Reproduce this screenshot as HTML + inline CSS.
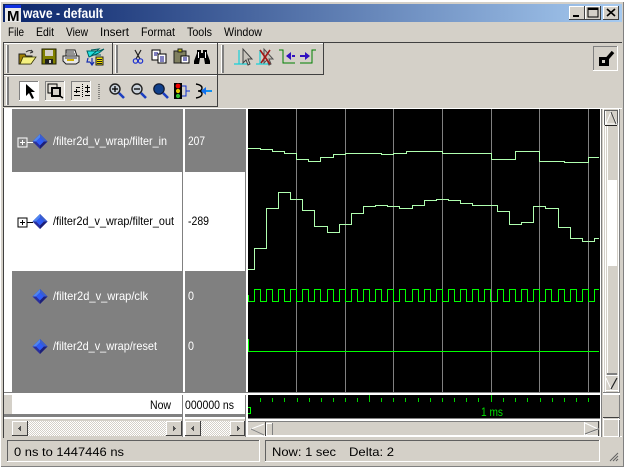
<!DOCTYPE html>
<html><head><meta charset="utf-8"><title>wave - default</title>
<style>
html,body{margin:0;padding:0;background:#fff;width:625px;height:469px;overflow:hidden}
svg{display:block}
text{font-family:"Liberation Sans",sans-serif;font-size:12px}
.c{shape-rendering:crispEdges}
</style></head><body>
<svg width="625" height="469" viewBox="0 0 625 469" xmlns="http://www.w3.org/2000/svg">
<defs>
<linearGradient id="tb" x1="0" x2="1" y1="0" y2="0"><stop offset="0" stop-color="#0a246a"/><stop offset="1" stop-color="#a6caf0"/></linearGradient>
<pattern id="dith" width="2" height="2" patternUnits="userSpaceOnUse"><rect width="2" height="2" fill="#fff"/><rect width="1" height="1" fill="#d4d0c8"/><rect x="1" y="1" width="1" height="1" fill="#d4d0c8"/></pattern>
<g id="dia"><polygon points="0,-7.5 7.5,0 0,7.5 -7.5,0" fill="#2a2f9c"/><polygon points="0,-7.5 -7.5,0 -4,0 0,-4" fill="#4f86f0"/><polygon points="0,-7.5 7.5,0 4,0 0,-4" fill="#3a5fd0"/><polygon points="0,-4 4,0 0,4 -4,0" fill="#2f5cf5"/><polygon points="0,7.5 7.5,0 4,0 0,4" fill="#1c1f78"/></g>
<g id="mag"><circle cx="6" cy="6" r="5" fill="#c8d0d8" stroke="#202020" stroke-width="1.4"/><path d="M10 10L15 15" stroke="#1c3fc0" stroke-width="2.6"/></g>
</defs>

<!-- window -->
<g class="c">
<rect x="1" y="2" width="623" height="465" fill="#d4d0c8"/>
<rect x="1" y="466" width="623" height="1" fill="#808080"/>
<rect x="623" y="2" width="1" height="465" fill="#808080"/>
<rect x="3" y="4" width="619" height="18" fill="url(#tb)"/>
</g>
<!-- title -->
<g class="c">
<rect x="5" y="5" width="16" height="3" fill="#1030e0"/><rect x="5" y="8" width="16" height="14" fill="#e8e8e8"/>
</g>
<text x="7" y="21" style="font-size:15px;font-weight:bold" fill="#000">M</text>
<text x="23" y="18" textLength="80" lengthAdjust="spacingAndGlyphs" style="font-size:14px;font-weight:bold" fill="#fff">wave - default</text>
<g class="c">
<rect x="569" y="6" width="16" height="14" fill="#d4d0c8"/><rect x="569" y="6" width="15" height="1" fill="#fff"/><rect x="569" y="6" width="1" height="13" fill="#fff"/><rect x="584" y="6" width="1" height="14" fill="#404040"/><rect x="569" y="19" width="16" height="1" fill="#404040"/><rect x="573" y="15" width="6" height="2" fill="#000"/>
<rect x="585" y="6" width="16" height="14" fill="#d4d0c8"/><rect x="585" y="6" width="15" height="1" fill="#fff"/><rect x="585" y="6" width="1" height="13" fill="#fff"/><rect x="600" y="6" width="1" height="14" fill="#404040"/><rect x="585" y="19" width="16" height="1" fill="#404040"/><rect x="588" y="8" width="10" height="9" fill="none" stroke="#000"/><rect x="588" y="8" width="10" height="2" fill="#000"/>
<rect x="603" y="6" width="16" height="14" fill="#d4d0c8"/><rect x="603" y="6" width="15" height="1" fill="#fff"/><rect x="603" y="6" width="1" height="13" fill="#fff"/><rect x="618" y="6" width="1" height="14" fill="#404040"/><rect x="603" y="19" width="16" height="1" fill="#404040"/>
</g>
<path d="M607 9L615 16M615 9L607 16" stroke="#000" stroke-width="1.6"/>

<!-- menu -->
<g fill="#000">
<text x="8" y="36" textLength="16" lengthAdjust="spacingAndGlyphs">File</text><text x="36" y="36" textLength="18" lengthAdjust="spacingAndGlyphs">Edit</text><text x="66" y="36" textLength="22" lengthAdjust="spacingAndGlyphs">View</text><text x="100" y="36" textLength="29" lengthAdjust="spacingAndGlyphs">Insert</text><text x="141" y="36" textLength="34" lengthAdjust="spacingAndGlyphs">Format</text><text x="187" y="36" textLength="25" lengthAdjust="spacingAndGlyphs">Tools</text><text x="224" y="36" textLength="38" lengthAdjust="spacingAndGlyphs">Window</text>
</g>

<!-- toolbars -->
<g class="c" fill="none">
<rect x="3" y="42" width="619" height="1" fill="#404040"/>
<rect x="3" y="43" width="1" height="64" fill="#404040"/>
<rect x="3" y="74" width="320" height="1" fill="#404040"/>
<rect x="112" y="42" width="1" height="33" fill="#404040"/>
<rect x="217" y="42" width="1" height="65" fill="#404040"/>
<rect x="323" y="42" width="1" height="33" fill="#404040"/>
<rect x="3" y="106" width="215" height="1" fill="#404040"/>
<rect x="4" y="43" width="108" height="1" fill="#fff"/><rect x="113" y="43" width="104" height="1" fill="#fff"/><rect x="218" y="43" width="105" height="1" fill="#fff"/><rect x="4" y="75" width="213" height="1" fill="#fff"/>
<rect x="6" y="45" width="1" height="28" fill="#fff"/><rect x="7" y="45" width="2" height="28" fill="#808080"/>
<rect x="115" y="45" width="1" height="28" fill="#fff"/><rect x="116" y="45" width="2" height="28" fill="#808080"/>
<rect x="221" y="45" width="1" height="28" fill="#fff"/><rect x="222" y="45" width="2" height="28" fill="#808080"/>
<rect x="6" y="77" width="1" height="28" fill="#fff"/><rect x="7" y="77" width="2" height="28" fill="#808080"/>
<!-- row 2 buttons -->
<rect x="19" y="81" width="20" height="20" fill="#fff"/><rect x="19" y="81" width="19" height="1" fill="#808080"/><rect x="19" y="81" width="1" height="19" fill="#808080"/>
<rect x="45" y="81" width="20" height="20" fill="#e4e0d8"/><rect x="45" y="81" width="20" height="1" fill="#808080"/><rect x="45" y="81" width="1" height="20" fill="#808080"/><rect x="45" y="100" width="20" height="1" fill="#fff"/><rect x="64" y="81" width="1" height="20" fill="#fff"/>
<rect x="71" y="81" width="20" height="20" fill="#e4e0d8"/><rect x="71" y="81" width="20" height="1" fill="#808080"/><rect x="71" y="81" width="1" height="20" fill="#808080"/><rect x="71" y="100" width="20" height="1" fill="#fff"/><rect x="90" y="81" width="1" height="20" fill="#fff"/>
<!-- top-right button -->
<rect x="593" y="46" width="25" height="25" fill="#d4d0c8"/><rect x="593" y="46" width="25" height="1" fill="#808080"/><rect x="593" y="46" width="1" height="25" fill="#808080"/><rect x="593" y="70" width="25" height="1" fill="#fff"/><rect x="617" y="46" width="1" height="25" fill="#fff"/>
<rect x="599" y="57" width="10" height="9" fill="#000"/><rect x="602" y="60" width="3" height="3" fill="#d4d0c8"/>
</g>
<path d="M606 60L613 52" stroke="#000" stroke-width="3.4"/>

<!-- row 1 icons -->
<g>
<path d="M19 54h6l1 2h6v2l-2 6H19z" fill="#a08000" stroke="#202020"/><path d="M20 64l3-7h13l-5 7z" fill="#f4f080" stroke="#303000" stroke-width=".8"/><path d="M26 52q4-3 7 0M33 52l-2-2M33 52l-3 1" fill="none" stroke="#303030"/>
<g class="c"><rect x="42" y="49" width="14" height="15" fill="#808000" stroke="#202000"/><rect x="45" y="50" width="8" height="6" fill="#d4d0c8"/><rect x="45" y="59" width="8" height="5" fill="#202020"/><rect x="49" y="60" width="2" height="3" fill="#d4d0c8"/></g>
<path d="M66 50h9l2 6h-11zM63 56h16v6l-3 2H66l-3-3z" fill="#e8e8e8" stroke="#202020"/><path d="M65 58h12M66 52h8M67 54h8" stroke="#404040"/><rect x="67" y="59" width="7" height="2" fill="#d0b000" class="c"/>
<path d="M87 51h12l5-2-5 4-10 4z" fill="#20e0e0" stroke="#006060"/><path d="M91 50l8-1-7 6h9" fill="none" stroke="#006060"/>
<rect x="96" y="57" width="7" height="8" fill="#f0e000" stroke="#202020" class="c"/><path d="M97 59.5h5M97 61.5h5M97 63.5h5" stroke="#202020"/>
<path d="M88 58l-1 4 3 0M92 58v6M90 62l2 3 2-3" fill="none" stroke="#1830b0" stroke-width="1.2"/>
<!-- scissors -->
<path d="M135 50l5 9M141 50l-5 9" stroke="#202020" stroke-width="1.2"/><circle cx="135.5" cy="61" r="2.2" fill="none" stroke="#1c30d0" stroke-width="1.2"/><circle cx="140.5" cy="61" r="2.2" fill="none" stroke="#1c30d0" stroke-width="1.2"/>
<!-- copy -->
<g class="c"><rect x="152" y="50" width="8" height="10" fill="#fff" stroke="#000"/><rect x="158" y="54" width="8" height="9" fill="#fff" stroke="#000"/></g><path d="M154 53h4M154 55h3M160 57h4M160 59h4M160 61h4" stroke="#000080"/>
<!-- paste -->
<g class="c"><rect x="174" y="51" width="12" height="12" fill="#808060" stroke="#202020"/><rect x="178" y="49" width="4" height="3" fill="#c0c000" stroke="#202020"/><rect x="181" y="56" width="8" height="7" fill="#fff" stroke="#000"/></g><path d="M183 58h4M183 60h4" stroke="#000080"/>
<!-- binoculars -->
<path d="M197 50h4v3h2v-3h4v3l3 8v3h-5l-1-6h-4l-1 6h-5v-3l3-8z" fill="#000"/><rect x="198" y="52" width="1" height="6" fill="#fff" class="c"/><rect x="205" y="52" width="1" height="6" fill="#fff" class="c"/>
<!-- third group -->
<path d="M239 50v14M234 64h13" stroke="#18d0d8" stroke-width="1.2" fill="none"/>
<path d="M243 49v14l3-3 2 5 2-1-2-5h4z" fill="#c8c4bc" stroke="#404040"/>
<path d="M260 50v14M256 64h13" stroke="#18d0d8" stroke-width="1.2" fill="none"/>
<path d="M264 49v14l3-3 2 5 2-1-2-5h4z" fill="#c8c4bc" stroke="#505050"/>
<path d="M260 50l10 14M270 50l-9 13" stroke="#a01818" stroke-width="1.6"/>
<path d="M279 50h4v13h12" class="c" fill="none" stroke="#008000"/><path d="M290 56h-3M292 56h3" stroke="#3010c0" stroke-width="2"/><path d="M286 56l5-4v8z" fill="#3010c0"/>
<path d="M316 50h-4v13h-12" class="c" fill="none" stroke="#008000"/><path d="M300 56h6" stroke="#3010c0" stroke-width="2"/><path d="M310 56l-5-4v8z" fill="#3010c0"/>
</g>

<!-- row 2 icons -->
<path d="M26 84v12l3-3 3 6 2-1-3-6h4z" fill="#000"/>
<g class="c"><rect x="48" y="84" width="9" height="9" fill="none" stroke="#000"/><rect x="52" y="88" width="8" height="8" fill="#d4d0c8" stroke="#000" stroke-width="2"/></g>
<path d="M60 96l3 2" stroke="#000" stroke-width="1.5"/>
<g class="c" fill="#000">
<rect x="74" y="91" width="6" height="1"/><rect x="74" y="95" width="6" height="1"/><rect x="82" y="84" width="1" height="1"/><rect x="82" y="86" width="1" height="1"/><rect x="82" y="88" width="1" height="1"/><rect x="82" y="90" width="1" height="1"/><rect x="82" y="92" width="1" height="1"/><rect x="82" y="94" width="1" height="1"/><rect x="82" y="96" width="1" height="1"/><rect x="85" y="87" width="5" height="1"/><rect x="85" y="91" width="5" height="1"/><rect x="85" y="95" width="5" height="1"/><rect x="76" y="87" width="4" height="1"/><rect x="87" y="85" width="1" height="4"/><rect x="87" y="89" width="1" height="4"/><rect x="76" y="89" width="1" height="4"/>
</g>
<path d="M99 84v15" stroke="#303030" stroke-dasharray="1 1" class="c"/>
<use href="#mag" x="109" y="83"/><path d="M112 89h6M115 86v6" stroke="#000" stroke-width="1.3"/>
<use href="#mag" x="131" y="83"/><path d="M134 89h6" stroke="#000" stroke-width="1.3"/>
<circle cx="159" cy="89" r="5.2" fill="#10408c" stroke="#101830" stroke-width="1.2"/><path d="M163 93l5 5" stroke="#1c3fc0" stroke-width="2.6"/>
<rect x="174" y="83" width="8" height="16" fill="#000" class="c"/><circle cx="178" cy="86" r="2.4" fill="#f00000"/><circle cx="178" cy="91" r="2.1" fill="#e8c800"/><circle cx="178" cy="96" r="2.1" fill="#30c030"/>
<path d="M182 86h4v5h4M182 96h4v-5" fill="none" stroke="#1030d0" class="c"/>
<path d="M196 84q6 1 6 4t-4 3q4 0 4 3t-6 4" fill="none" stroke="#000" stroke-width="1.4"/>
<path d="M204 91h8" stroke="#1090f0" stroke-width="2"/><path d="M201 91l5-4v8z" fill="#1070f0"/>

<!-- panes -->
<g class="c">
<rect x="3" y="108" width="619" height="1" fill="#fff"/>
<rect x="3" y="108" width="1" height="330" fill="#404040"/>
<rect x="4" y="109" width="8" height="283" fill="#fff"/>
<rect x="12" y="109" width="170" height="63" fill="#808080"/>
<rect x="12" y="172" width="170" height="99" fill="#fff"/>
<rect x="12" y="271" width="170" height="121" fill="#808080"/>
<rect x="182" y="109" width="1" height="328" fill="#808080"/><rect x="183" y="109" width="2" height="328" fill="#fff"/>
<rect x="185" y="109" width="60" height="63" fill="#808080"/>
<rect x="185" y="172" width="60" height="99" fill="#fff"/>
<rect x="185" y="271" width="60" height="121" fill="#808080"/>
<rect x="245" y="109" width="1" height="328" fill="#808080"/><rect x="246" y="109" width="2" height="328" fill="#fff"/>
<rect x="248" y="109" width="352" height="283" fill="#000"/>
<g fill="#808080">
<rect x="296" y="109" width="1" height="283"/><rect x="345" y="109" width="1" height="283"/><rect x="393" y="109" width="1" height="283"/><rect x="442" y="109" width="1" height="283"/><rect x="491" y="109" width="1" height="283"/><rect x="539" y="109" width="1" height="283"/><rect x="588" y="109" width="1" height="283"/>
</g>
<!-- horizontal split -->
<rect x="4" y="392" width="596" height="1" fill="#808080"/><rect x="4" y="393" width="596" height="2" fill="#fff"/>
<rect x="4" y="395" width="8" height="19" fill="#d4d0c8"/>
<rect x="12" y="395" width="170" height="19" fill="#fff"/>
<rect x="185" y="395" width="60" height="19" fill="#fff"/>
<rect x="248" y="395" width="352" height="23" fill="#000"/>
<rect x="4" y="414" width="241" height="3" fill="#808080"/><rect x="4" y="417" width="241" height="2" fill="#fff"/>
<rect x="4" y="419" width="241" height="18" fill="#d4d0c8"/>
<rect x="183" y="395" width="2" height="42" fill="#fff"/><rect x="182" y="395" width="1" height="42" fill="#808080"/>
<rect x="246" y="395" width="2" height="42" fill="#fff"/><rect x="245" y="395" width="1" height="42" fill="#808080"/>
<rect x="248" y="418" width="352" height="1" fill="#808080"/><rect x="248" y="419" width="352" height="2" fill="#fff"/>
<rect x="248" y="421" width="351" height="15" fill="#d4d0c8"/><rect x="248" y="421" width="351" height="1" fill="#808080"/><rect x="248" y="435" width="351" height="1" fill="#fff"/>
<rect x="248" y="436" width="374" height="1" fill="#fff"/>
<!-- h scrollbars -->
<rect x="12" y="421" width="170" height="15" fill="url(#dith)"/>
<rect x="12" y="421" width="16" height="15" fill="#d4d0c8"/><rect x="12" y="421" width="16" height="1" fill="#fff"/><rect x="12" y="421" width="1" height="15" fill="#fff"/><rect x="12" y="435" width="16" height="1" fill="#404040"/><rect x="27" y="421" width="1" height="15" fill="#404040"/>
<rect x="166" y="421" width="16" height="15" fill="#d4d0c8"/><rect x="166" y="421" width="16" height="1" fill="#fff"/><rect x="166" y="421" width="1" height="15" fill="#fff"/><rect x="166" y="435" width="16" height="1" fill="#404040"/><rect x="181" y="421" width="1" height="15" fill="#404040"/>
<rect x="185" y="421" width="60" height="15" fill="url(#dith)"/>
<rect x="185" y="421" width="16" height="15" fill="#d4d0c8"/><rect x="185" y="421" width="16" height="1" fill="#fff"/><rect x="185" y="421" width="1" height="15" fill="#fff"/><rect x="185" y="435" width="16" height="1" fill="#404040"/><rect x="200" y="421" width="1" height="15" fill="#404040"/>
<rect x="230" y="421" width="15" height="15" fill="#d4d0c8"/><rect x="230" y="421" width="15" height="1" fill="#fff"/><rect x="230" y="421" width="1" height="15" fill="#fff"/><rect x="230" y="435" width="15" height="1" fill="#404040"/><rect x="244" y="421" width="1" height="15" fill="#404040"/>
<!-- wave hscroll -->
<rect x="265" y="422" width="1" height="14" fill="#404040"/><rect x="266" y="423" width="1" height="12" fill="#fff"/>
<rect x="267" y="424" width="6" height="11" fill="#d4d0c8"/><rect x="272" y="423" width="1" height="12" fill="#808080"/><rect x="267" y="423" width="5" height="1" fill="#fff"/>
<rect x="584" y="422" width="1" height="13" fill="#fff"/><rect x="598" y="421" width="1" height="15" fill="#404040"/>
<!-- v scroll -->
<rect x="600" y="109" width="1" height="328" fill="#fff"/><rect x="601" y="109" width="1" height="328" fill="#808080"/><rect x="602" y="109" width="1" height="328" fill="#d4d0c8"/><rect x="603" y="109" width="1" height="328" fill="#fff"/>
<rect x="604" y="110" width="14" height="282" fill="#d4d0c8"/>
<rect x="604" y="110" width="14" height="1" fill="#606060"/><rect x="604" y="110" width="1" height="15" fill="#606060"/><rect x="617" y="110" width="1" height="15" fill="#606060"/>
<rect x="605" y="111" width="1" height="281" fill="#fff"/>
<rect x="607" y="125" width="1" height="250" fill="#fff"/><rect x="616" y="125" width="1" height="250" fill="#fff"/>
<rect x="605" y="125" width="12" height="1" fill="#202020"/>
<rect x="608" y="126" width="9" height="54" fill="#d4d0c8"/>
<rect x="608" y="180" width="9" height="86" fill="#fff"/>
<rect x="608" y="266" width="9" height="108" fill="#d4d0c8"/>
<rect x="607" y="373" width="10" height="2" fill="#808080"/><rect x="605" y="375" width="13" height="1" fill="#fff"/>
<rect x="605" y="390" width="13" height="1" fill="#fff"/>
<rect x="618" y="109" width="1" height="328" fill="#fff"/><rect x="619" y="109" width="1" height="328" fill="#808080"/>
<rect x="603" y="392" width="17" height="1" fill="#808080"/><rect x="603" y="393" width="17" height="2" fill="#fff"/>
<rect x="603" y="395" width="16" height="22" fill="#d4d0c8"/><rect x="603" y="417" width="16" height="1" fill="#404040"/><rect x="603" y="419" width="17" height="1" fill="#fff"/>
</g>
<!-- arrow triangle outlines -->
<path d="M611 112l-5 12h11z" fill="#d4d0c8" stroke="#fff"/><path d="M611 112l5 12" stroke="#404040" fill="none"/>
<path d="M606 378l5 11 6-11" fill="none" stroke="#fff"/><path d="M611 389l6-11" stroke="#202020" stroke-width="1.2"/>
<path d="M264 424L251 429L264 435" fill="none" stroke="#fff"/><path d="M251 429L264 435" stroke="#808080"/>
<path d="M585 423l13 6-13 6" fill="none" stroke="#fff"/><path d="M598 429l-13 5" stroke="#707070"/>
<path class="c" fill="#505050" d="M20 426h1v1h-1zM19 427h2v1h-2zM18 428h3v1h-3zM19 429h2v1h-2zM20 430h1v1h-1zM193 426h1v1h-1zM192 427h2v1h-2zM191 428h3v1h-3zM192 429h2v1h-2zM193 430h1v1h-1z"/>
<path class="c" fill="#505050" d="M173 426h1v5h-1zM174 427h1v3h-1zM175 428h1v1h-1zM237 426h1v5h-1zM238 427h1v3h-1zM239 428h1v1h-1z"/>

<!-- signal rows -->
<g class="c">
<rect x="18" y="138" width="9" height="9" fill="none" stroke="#fff"/><rect x="20" y="142" width="5" height="1" fill="#fff"/><rect x="22" y="140" width="1" height="5" fill="#fff"/><rect x="27" y="142" width="6" height="1" fill="#fff"/>
<rect x="18" y="218" width="9" height="9" fill="none" stroke="#000"/><rect x="20" y="222" width="5" height="1" fill="#000"/><rect x="22" y="220" width="1" height="5" fill="#000"/><rect x="27" y="222" width="6" height="1" fill="#000"/>
</g>
<use href="#dia" x="40" y="141.5"/><use href="#dia" x="40" y="221.5"/><use href="#dia" x="40" y="296.5"/><use href="#dia" x="40" y="346.5"/>
<g fill="#fff">
<text x="53" y="145" textLength="114" lengthAdjust="spacingAndGlyphs">/filter2d_v_wrap/filter_in</text>
<text x="53" y="300" textLength="95" lengthAdjust="spacingAndGlyphs">/filter2d_v_wrap/clk</text>
<text x="53" y="350" textLength="104" lengthAdjust="spacingAndGlyphs">/filter2d_v_wrap/reset</text>
<text x="188" y="145" textLength="17" lengthAdjust="spacingAndGlyphs">207</text>
<text x="188" y="300" textLength="6" lengthAdjust="spacingAndGlyphs">0</text>
<text x="188" y="350" textLength="6" lengthAdjust="spacingAndGlyphs">0</text>
</g>
<g fill="#000">
<text x="53" y="225" textLength="121" lengthAdjust="spacingAndGlyphs">/filter2d_v_wrap/filter_out</text>
<text x="188" y="225" textLength="21" lengthAdjust="spacingAndGlyphs">-289</text>
<text x="150" y="409" textLength="21" lengthAdjust="spacingAndGlyphs">Now</text>
<text x="185" y="409" textLength="49" lengthAdjust="spacingAndGlyphs">000000 ns</text>
</g>

<!-- waves -->
<g fill="none" class="c">
<path stroke="#b0ffb0" d="M248 148.5H260.5V149.5H272.5V151.5H284.5V153.5H296.5V159.5H308.5V161.5H320.5V157.5H333.5V154.5H345.5V153.5H381.5V154.5H393.5V153.5H406.5V151.5H442.5V153.5H491.5V159.5H515.5V151.5H539.5V161.5H564.5V162.5H588.5V157.5H599"/>
<path stroke="#b0ffb0" d="M248 269.5H254.5V248.5H266.5V208.5H278.5V192.5H290.5V199.5H302.5V210.5H314.5V226.5H327.5V232.5H339.5V224.5H351.5V213.5H363.5V206.5H375.5V205.5H387.5V206.5H399.5V208.5H412.5V205.5H424.5V200.5H436.5V199.5H448.5V200.5H460.5V203.5H472.5V205.5H497.5V211.5H509.5V224.5H521.5V222.5H533.5V206.5H545.5V208.5H558.5V227.5H570.5V238.5H582.5V241.5H594.5V238.5H599"/>
<path stroke="#00ff00" d="M248.5 295V301.5H254.5V289.5H260.5V301.5H266.5V289.5H272.5V301.5H278.5V289.5H284.5V301.5H290.5V289.5H296.5V301.5H302.5V289.5H308.5V301.5H314.5V289.5H320.5V301.5H327.5V289.5H333.5V301.5H339.5V289.5H345.5V301.5H351.5V289.5H357.5V301.5H363.5V289.5H369.5V301.5H375.5V289.5H381.5V301.5H387.5V289.5H393.5V301.5H399.5V289.5H405.5V301.5H412.5V289.5H418.5V301.5H424.5V289.5H430.5V301.5H436.5V289.5H442.5V301.5H448.5V289.5H454.5V301.5H460.5V289.5H466.5V301.5H472.5V289.5H478.5V301.5H484.5V289.5H490.5V301.5H497.5V289.5H503.5V301.5H509.5V289.5H515.5V301.5H521.5V289.5H527.5V301.5H533.5V289.5H539.5V301.5H545.5V289.5H551.5V301.5H558.5V289.5H564.5V301.5H570.5V289.5H576.5V301.5H582.5V289.5H588.5V301.5H594.5V289.5H599"/>
<path stroke="#00ff00" d="M248.5 339V351.5H599"/>
<path stroke="#00d000" d="M260.5 398v4M272.5 398v4M284.5 398v4M297.5 398v4M309.5 398v4M321.5 398v4M333.5 398v4M345.5 398v4M357.5 398v4M369.5 395v7M381.5 398v4M393.5 398v4M405.5 398v4M418.5 398v4M430.5 398v4M442.5 398v4M454.5 398v4M466.5 398v4M478.5 398v4M491.5 395v7M503.5 398v4M515.5 398v4M527.5 398v4M540.5 398v4M552.5 398v4M564.5 398v4M576.5 398v4M588.5 398v4"/>
<path stroke="#00ff00" d="M248 407.5h2.5v6H248"/>
</g>
<text x="481" y="416" textLength="22" lengthAdjust="spacingAndGlyphs" fill="#00e000">1 ms</text>

<!-- status bar -->
<g class="c">
<rect x="7" y="440" width="253" height="1" fill="#606060"/><rect x="7" y="440" width="1" height="22" fill="#606060"/><rect x="7" y="461" width="253" height="1" fill="#fff"/><rect x="259" y="440" width="1" height="22" fill="#fff"/>
<rect x="265" y="440" width="335" height="1" fill="#606060"/><rect x="265" y="440" width="1" height="22" fill="#606060"/><rect x="265" y="461" width="335" height="1" fill="#fff"/><rect x="599" y="440" width="1" height="22" fill="#fff"/>
</g>
<g fill="#000">
<text x="14" y="456" textLength="110" lengthAdjust="spacingAndGlyphs">0 ns to 1447446 ns</text>
<text x="272" y="456" textLength="64" lengthAdjust="spacingAndGlyphs">Now: 1 sec</text>
<text x="349" y="456" textLength="45" lengthAdjust="spacingAndGlyphs">Delta: 2</text>
</g>
<path d="M610 461l8-8M613 461l5-5M616 461l2-2" stroke="#606060" fill="none"/>
</svg>
</body></html>
